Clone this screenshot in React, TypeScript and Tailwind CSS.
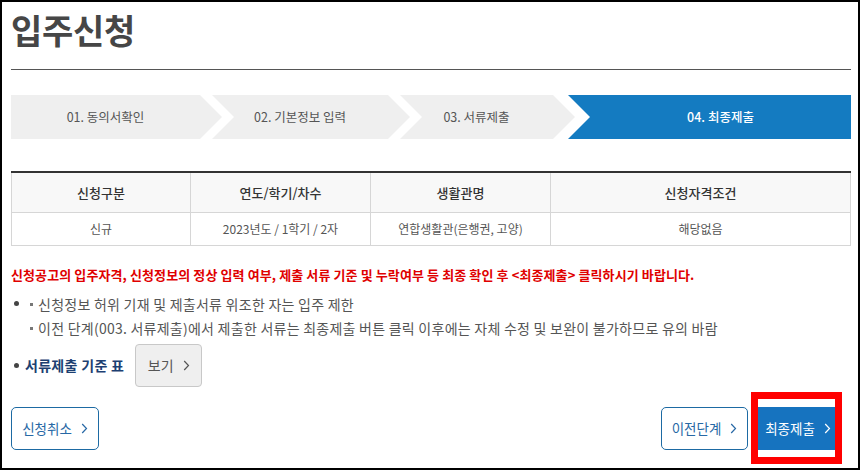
import React from "react";

const Chevron = ({ className = "" }: { className?: string }) => (
  <svg width="7" height="11" viewBox="0 0 7 11" className={className} fill="none">
    <path d="M1.2 1l4.3 4.5-4.3 4.5" stroke="currentColor" strokeWidth="1.2" />
  </svg>
);

const Dot = () => <span className="w-[5px] h-[5px] rounded-full bg-[#444] shrink-0" />;
const Square = () => <span className="inline-block w-[3px] h-[3px] bg-[#777] mr-[5px] align-middle mb-[2px]" />;

const steps = [
  {
    label: "01. 동의서확인",
    box: "w-[211px] bg-[#efefef] text-[#555] pr-[22px] [clip-path:polygon(0_0,189px_0,211px_50%,189px_100%,0_100%)]",
  },
  {
    label: "02. 기본정보 입력",
    box: "w-[198px] -ml-[10px] bg-[#efefef] text-[#555] pr-[22px] [clip-path:polygon(0_0,176px_0,198px_50%,176px_100%,0_100%,22px_50%)]",
  },
  {
    label: "03. 서류제출",
    box: "w-[175px] -ml-[10px] bg-[#efefef] text-[#555] pr-[22px] [clip-path:polygon(0_0,153px_0,175px_50%,153px_100%,0_100%,22px_50%)]",
  },
  {
    label: "04. 최종제출",
    box: "w-[283px] -ml-[7px] bg-[#147bc1] text-white font-medium pl-[22px] [clip-path:polygon(0_0,100%_0,100%_100%,0_100%,22px_50%)]",
  },
];

export default function App() {
  return (
    <div className="w-[860px] h-[470px] border-2 border-black bg-white pl-[9px] pr-[7px] flex flex-col font-['Noto_Sans_CJK_KR','Noto_Sans',sans-serif] overflow-hidden">
      <div className="pt-[8px]">
        <h1 className="text-[34px] leading-[40px] font-bold text-[#464646] tracking-[-0.3px]">입주신청</h1>
      </div>
      <div className="mt-[19px] h-px bg-[#555]" />

      {/* steps */}
      <div className="mt-[25px] h-[44px] flex">
        {steps.map((s) => (
          <div key={s.label} className={`h-full shrink-0 flex items-center justify-center text-[12.5px] ${s.box}`}>
            {s.label}
          </div>
        ))}
      </div>

      {/* info table */}
      <table className="mt-[32px] w-full border-collapse table-fixed text-[12px]">
        <colgroup>
          <col className="w-[179px]" />
          <col className="w-[180px]" />
          <col className="w-[180px]" />
          <col />
        </colgroup>
        <thead>
          <tr className="h-[40px] bg-[#f8f8f8] border-t-2 border-t-[#333] text-[13px] text-[#333]">
            <th className="border-x border-b border-[#d6d6d6] font-medium">신청구분</th>
            <th className="border-x border-b border-[#d6d6d6] font-medium">연도/학기/차수</th>
            <th className="border-x border-b border-[#d6d6d6] font-medium">생활관명</th>
            <th className="border-x border-b border-[#d6d6d6] font-medium">신청자격조건</th>
          </tr>
        </thead>
        <tbody>
          <tr className="h-[33px] text-[#555] text-center">
            <td className="border border-[#d6d6d6]">신규</td>
            <td className="border border-[#d6d6d6]">2023년도 / 1학기 / 2자</td>
            <td className="border border-[#d6d6d6]">연합생활관(은행권, 고양)</td>
            <td className="border border-[#d6d6d6]">해당없음</td>
          </tr>
        </tbody>
      </table>

      <p className="mt-[20px] text-[13px] leading-[18px] font-bold text-[#e00000] tracking-[0.1px]">
        신청공고의 입주자격, 신청정보의 정상 입력 여부, 제출 서류 기준 및 누락여부 등 최종 확인 후 &lt;최종제출&gt; 클릭하시기 바랍니다.
      </p>

      <div className="mt-[8px] flex text-[14px] leading-[24px] text-[#555] tracking-[0.25px]">
        <div className="w-[19px] h-[24px] pl-[3px] flex items-center">
          <Dot />
        </div>
        <div className="flex flex-col">
          <span><Square />신청정보 허위 기재 및 제출서류 위조한 자는 입주 제한</span>
          <span><Square />이전 단계(003. 서류제출)에서 제출한 서류는 최종제출 버튼 클릭 이후에는 자체 수정 및 보완이 불가하므로 유의 바람</span>
        </div>
      </div>

      <div className="mt-[4px] flex items-center">
        <div className="w-[14px] pl-[3px] flex items-center">
          <Dot />
        </div>
        <span className="text-[14px] font-bold text-[#1d3f72] tracking-[0.3px]">서류제출 기준 표</span>
        <button className="ml-[11px] w-[67px] h-[43px] flex items-center justify-center gap-[9px] bg-[#efefef] border border-[#c8c8c8] rounded-[4px] text-[14px] text-[#555]">
          보기
          <Chevron />
        </button>
      </div>

      <div className="mt-[20px] flex justify-between">
        <button className="w-[88px] h-[43px] flex items-center justify-center gap-[9px] border border-[#1d6aa3] rounded-[5px] text-[13.5px] text-[#2768a5]">
          신청취소
          <Chevron />
        </button>
        <div className="flex gap-[10px] mr-[13px]">
          <button className="w-[87px] h-[43px] flex items-center justify-center gap-[9px] border border-[#1d6aa3] rounded-[5px] text-[13.5px] text-[#2768a5]">
            이전단계
            <Chevron />
          </button>
          <div className="relative">
            <button className="w-[80px] h-[43px] flex items-center justify-center gap-[9px] bg-[#1673bf] text-[13.5px] text-white">
              최종제출
              <Chevron />
            </button>
            <div className="absolute -left-[7px] -top-[15px] w-[91px] h-[72px] border-[7px] border-[#ff0000] pointer-events-none" />
          </div>
        </div>
      </div>
    </div>
  );
}
